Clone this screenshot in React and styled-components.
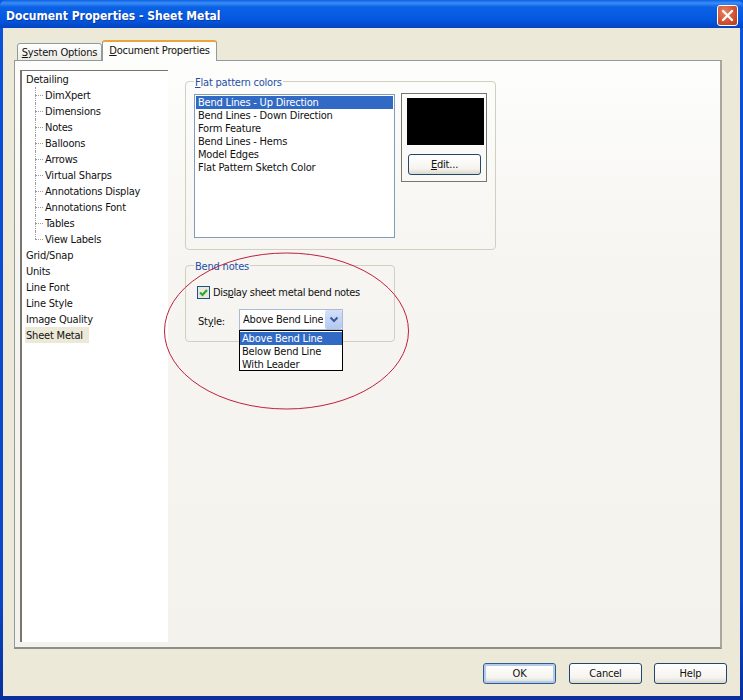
import React from "react";
import styled, { createGlobalStyle } from "styled-components";

const GlobalStyle = createGlobalStyle`
  html, body {
    margin: 0;
    padding: 0;
    background: #ece9d8;
  }
  * {
    box-sizing: border-box;
  }
`;

const Window = styled.div`
  position: relative;
  display: flex;
  flex-direction: column;
  width: 743px;
  height: 700px;
  overflow: hidden;
  padding: 0 3px 4px;
  background: linear-gradient(#0a5ae0, #0b50d8 50px, #0a46c8 600px, #0a2f9c);
  font-family: "DejaVu Sans", "Liberation Sans", Arial, sans-serif;
  font-stretch: condensed;
  font-size: 11px;
  letter-spacing: -0.2px;
  color: #111;
`;

const TitleBar = styled.div`
  display: flex;
  align-items: center;
  justify-content: space-between;
  height: 28px;
  margin: 0 -3px;
  padding: 3px 5px 0 6px;
  background: linear-gradient(#0a5fe6 0, #3c8ef5 3px, #0b62e6 7px, #0457e0 20px, #0346c4 27px);
  border-radius: 6px 6px 0 0;
`;

const TitleText = styled.span`
  font-size: 12px;
  font-weight: 700;
  letter-spacing: 0;
  color: #fff;
  text-shadow: 1px 1px 0 #0b3aa0;
`;

const CloseButton = styled.div`
  display: flex;
  align-items: center;
  justify-content: center;
  width: 21px;
  height: 21px;
  border: 1px solid #fff;
  border-radius: 3px;
  background: radial-gradient(circle at 35% 30%, #e8815f, #cf4f2f 60%, #b83a1c);
`;

const Client = styled.div`
  display: flex;
  flex-direction: column;
  flex: 1;
  padding: 12px 18px 0 11px;
  background: #ece9d8;
`;

const TabBar = styled.div`
  display: flex;
  align-items: flex-end;
  height: 21px;
  padding-left: 3px;
  position: relative;
  z-index: 1;
  margin-bottom: -1px;
`;

const Tab = styled.div`
  display: flex;
  align-items: center;
  justify-content: center;
  width: ${(p) => p.$width}px;
  height: ${(p) => (p.$active ? 21 : 18)}px;
  padding-bottom: ${(p) => (p.$active ? 3 : 0)}px;
  border: 1px solid #919b9c;
  border-bottom: ${(p) => (p.$active ? "none" : "1px solid #919b9c")};
  border-top: ${(p) => (p.$active ? "2px solid #e9a53c" : "1px solid #919b9c")};
  border-radius: 3px 3px 0 0;
  background: ${(p) => (p.$active ? "#fdfdfc" : "linear-gradient(#fff, #ecebe4)")};
  white-space: nowrap;
`;

const Panel = styled.div`
  display: flex;
  height: 589px;
  padding: 9px 0 5px 5px;
  border: 1px solid #919b9c;
  border-bottom: 2px solid #8e8f88;
  border-right: 2px solid #a8a89f;
  background: linear-gradient(#fdfdfc 0, #f6f5f1 200px, #f3f2ed 100%);
`;

const Tree = styled.div`
  position: relative;
  width: 148px;
  padding: 0 0 0 3px;
  background: #fff;
  border-top: 1px solid #77776f;
  border-left: 2px solid #77776f;
`;

const TreeRow = styled.div`
  display: flex;
  align-items: center;
  width: ${(p) => (p.$selected ? "64px" : "auto")};
  height: 16px;
  margin-left: ${(p) => (p.$child ? "19px" : "0")};
  padding-left: 1px;
  background: ${(p) => (p.$selected ? "#ece9d8" : "transparent")};
  white-space: nowrap;
  position: relative;

  &::before {
    content: "";
    display: ${(p) => (p.$child ? "block" : "none")};
    position: absolute;
    left: -9px;
    top: 8px;
    width: 8px;
    border-top: 1px dotted #9a9a9a;
  }
  &::after {
    content: "";
    display: ${(p) => (p.$child ? "block" : "none")};
    position: absolute;
    left: -9px;
    top: 0;
    height: ${(p) => (p.$last ? 8 : 16)}px;
    border-left: 1px dotted #9a9a9a;
  }
`;

const Content = styled.div`
  position: relative;
  flex: 1;
  padding: 2px 0 0 17px;
`;

const Group = styled.fieldset`
  width: ${(p) => p.$width}px;
  height: ${(p) => p.$height}px;
  margin: ${(p) => p.$top}px 0 0;
  padding: 0 8px;
  border: 1px solid #d0d0bf;
  border-radius: 4px;
  min-inline-size: auto;
`;

const Legend = styled.legend`
  margin-left: 0;
  padding: 4px 1px 0;
  line-height: 14px;
  color: #1f4fa8;
`;

const ColorRow = styled.div`
  display: flex;
  gap: 6px;
  margin-top: 4px;
`;

const ListBox = styled.div`
  width: 201px;
  height: 144px;
  padding: 1px;
  background: #fff;
  border: 1px solid #7f9db9;
`;

const ListRow = styled.div`
  height: 13px;
  padding-left: 2px;
  line-height: 13px;
  white-space: nowrap;
  background: ${(p) => (p.$selected ? "#316ac5" : "transparent")};
  color: ${(p) => (p.$selected ? "#fff" : "#111")};
`;

const SwatchBox = styled.div`
  display: flex;
  flex-direction: column;
  align-items: flex-start;
  width: 86px;
  height: 89px;
  margin-top: -1px;
  padding: 4px 0 0 5px;
  border: 1px solid #77776f;
`;

const Swatch = styled.div`
  width: 77px;
  height: 47px;
  background: #000;
`;

const EditButtonSlot = styled.div`
  padding: 9px 0 0 1px;
`;

const XpButton = styled.div`
  display: flex;
  align-items: center;
  justify-content: center;
  flex: none;
  width: 73px;
  height: 21px;
  margin-right: ${(p) => (p.$default ? 1 : 0)}px;
  border: 1px solid ${(p) => (p.$default ? "#2f5c8f" : "#24466b")};
  border-radius: 3px;
  background: linear-gradient(#fff, #f5f4ef 70%, #dcd9cc);
  box-shadow: ${(p) => (p.$default ? "inset 0 0 0 2px #b4cbee" : "none")};
`;

const CheckRow = styled.div`
  display: flex;
  align-items: center;
  gap: 3px;
  margin: 12px 0 0 3px;
`;

const CheckBox = styled.div`
  display: flex;
  align-items: center;
  justify-content: center;
  width: 13px;
  height: 13px;
  border: 1px solid #1c5180;
  background: #e9e8df;
`;

const CheckLabel = styled.span`
  letter-spacing: -0.35px;
`;

const StyleRow = styled.div`
  display: flex;
  align-items: center;
  margin: 10px 0 0 4px;
`;

const StyleLabel = styled.span`
  width: 41px;
  padding-top: 4px;
`;

const Combo = styled.div`
  position: relative;
  display: flex;
  align-items: center;
  justify-content: space-between;
  width: 104px;
  height: 21px;
  padding: 0 0 0 3px;
  background: #fff;
  border: 1px solid #a9bcd4;
  white-space: nowrap;
`;

const ComboValue = styled.span`
  width: 80px;
  overflow: hidden;
`;

const ComboArrow = styled.div`
  display: flex;
  align-items: center;
  justify-content: center;
  width: 17px;
  height: 19px;
  border-radius: 2px;
  background: linear-gradient(#d5e0f8, #b3c8f2);
`;

const DropList = styled.div`
  position: absolute;
  z-index: 2;
  top: 20px;
  left: -1px;
  width: 104px;
  height: 41px;
  padding-top: 1px;
  background: #fff;
  border: 1px solid #000;
`;

const DropRow = styled.div`
  height: 13px;
  padding-left: 2px;
  line-height: 13px;
  background: ${(p) => (p.$selected ? "#316ac5" : "transparent")};
  color: ${(p) => (p.$selected ? "#fff" : "#111")};
`;

const Ellipse = styled.svg`
  position: absolute;
  z-index: 3;
  left: 160px;
  top: 250px;
  pointer-events: none;
`;

const Footer = styled.div`
  display: flex;
  justify-content: flex-end;
  gap: 12px;
  padding: 14px 0 0;
  margin-right: -5px;
`;

const treeItems = [
  { label: "Detailing" },
  { label: "DimXpert", child: true },
  { label: "Dimensions", child: true },
  { label: "Notes", child: true },
  { label: "Balloons", child: true },
  { label: "Arrows", child: true },
  { label: "Virtual Sharps", child: true },
  { label: "Annotations Display", child: true },
  { label: "Annotations Font", child: true },
  { label: "Tables", child: true },
  { label: "View Labels", child: true, last: true },
  { label: "Grid/Snap" },
  { label: "Units" },
  { label: "Line Font" },
  { label: "Line Style" },
  { label: "Image Quality" },
  { label: "Sheet Metal", selected: true },
];

const colorItems = [
  "Bend Lines - Up Direction",
  "Bend Lines - Down Direction",
  "Form Feature",
  "Bend Lines - Hems",
  "Model Edges",
  "Flat Pattern Sketch Color",
];

const App = () => {
  return (
    <Window>
      <GlobalStyle />
      <TitleBar>
        <TitleText>Document Properties - Sheet Metal</TitleText>
        <CloseButton>
          <svg width="13" height="13" viewBox="0 0 13 13">
            <path d="M2 2 L11 11 M11 2 L2 11" stroke="#fff" strokeWidth="2.4" strokeLinecap="round" />
          </svg>
        </CloseButton>
      </TitleBar>
      <Client>
        <TabBar>
          <Tab $width={85}>
            <span><u>S</u>ystem Options</span>
          </Tab>
          <Tab $active $width={115}>
            <span><u>D</u>ocument Properties</span>
          </Tab>
        </TabBar>
        <Panel>
          <Tree>
            {treeItems.map((item) => (
              <TreeRow key={item.label} $child={item.child} $last={item.last} $selected={item.selected}>
                {item.label}
              </TreeRow>
            ))}
          </Tree>
          <Content>
            <Group $width={311} $height={178} $top={0}>
              <Legend><u>F</u>lat pattern colors</Legend>
              <ColorRow>
                <ListBox>
                  {colorItems.map((item, i) => (
                    <ListRow key={item} $selected={i === 0}>{item}</ListRow>
                  ))}
                </ListBox>
                <SwatchBox>
                  <Swatch />
                  <EditButtonSlot>
                    <XpButton><span><u>E</u>dit...</span></XpButton>
                  </EditButtonSlot>
                </SwatchBox>
              </ColorRow>
            </Group>
            <Group $width={210} $height={86} $top={6}>
              <Legend>Bend notes</Legend>
              <CheckRow>
                <CheckBox>
                  <svg width="11" height="11" viewBox="0 0 11 11">
                    <path d="M2 5.5 L4.5 8 L9 3" fill="none" stroke="#2fa62f" strokeWidth="2.2" />
                  </svg>
                </CheckBox>
                <CheckLabel>Dis<u>p</u>lay sheet metal bend notes</CheckLabel>
              </CheckRow>
              <StyleRow>
                <StyleLabel>St<u>y</u>le:</StyleLabel>
                <Combo>
                  <ComboValue>Above Bend Line</ComboValue>
                  <ComboArrow>
                    <svg width="10" height="8" viewBox="0 0 10 8">
                      <path d="M1.5 1.5 L5 5 L8.5 1.5" fill="none" stroke="#3a5a98" strokeWidth="2" />
                    </svg>
                  </ComboArrow>
                  <DropList>
                    <DropRow $selected>Above Bend Line</DropRow>
                    <DropRow>Below Bend Line</DropRow>
                    <DropRow>With Leader</DropRow>
                  </DropList>
                </Combo>
              </StyleRow>
            </Group>
          </Content>
        </Panel>
        <Footer>
          <XpButton $default>OK</XpButton>
          <XpButton>Cancel</XpButton>
          <XpButton>Help</XpButton>
        </Footer>
      </Client>
      <Ellipse width="252" height="162" viewBox="0 0 252 162">
        <ellipse cx="126.5" cy="81" rx="122" ry="78" fill="none" stroke="#c0203a" strokeWidth="1" />
      </Ellipse>
    </Window>
  );
};

export default App;
